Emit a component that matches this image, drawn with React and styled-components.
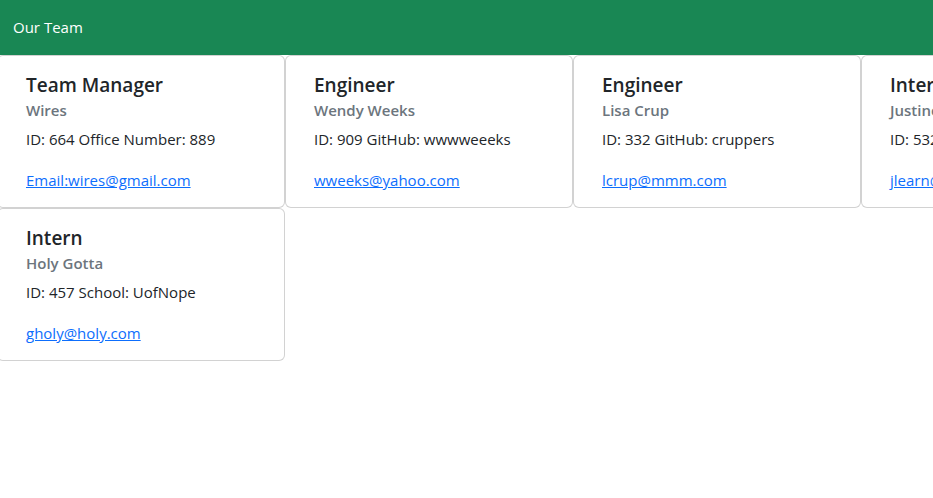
import React from "react";
import styled, { createGlobalStyle } from "styled-components";

const Global = createGlobalStyle`
  html, body { margin: 0; padding: 0; background: #fff; overflow-x: hidden; }
  body {
    font-family: "Segoe UI", "Open Sans", "Noto Sans", "Liberation Sans", sans-serif;
    font-size: 16px;
    line-height: 1.5;
    color: #212529;
  }
  * { box-sizing: border-box; }
`;

const Header = styled.header`
  height: 55px;
  background: #198754;
  color: #fff;
  display: flex;
  align-items: center;
  padding: 0 13px;
  font-size: 15px;
`;

const Grid = styled.main`
  display: grid;
  grid-template-columns: repeat(4, 288px);
  width: 1152px;
  margin-left: -3px;
`;

const Card = styled.section`
  border: 1px solid rgba(0, 0, 0, 0.175);
  border-radius: 6px;
  padding: 17px 28px 15px;
  background: #fff;
  white-space: nowrap;
  overflow: hidden;
`;

const Title = styled.h5`
  margin: 0 0 8px;
  font-size: 19px;
  font-weight: 600;
  line-height: 24px;
  color: #212529;
`;

const Subtitle = styled.h6`
  margin: -4px 0 0;
  font-size: 15px;
  font-weight: 600;
  line-height: 19px;
  color: #6c757d;
`;

const Info = styled.p`
  margin: 7px 0 17px;
  font-size: 15px;
  line-height: 24px;
`;

const Mail = styled.a`
  display: inline-block;
  color: #0d6efd;
  text-decoration: underline;
  font-size: 15px;
  line-height: 24px;
`;

const team = [
  { role: "Team Manager", name: "Wires", info: "ID: 664 Office Number: 889", email: "wires@gmail.com", label: "Email:wires@gmail.com" },
  { role: "Engineer", name: "Wendy Weeks", info: "ID: 909 GitHub: wwwweeeks", email: "wweeks@yahoo.com" },
  { role: "Engineer", name: "Lisa Crup", info: "ID: 332 GitHub: cruppers", email: "lcrup@mmm.com" },
  { role: "Intern", name: "Justine Learn", info: "ID: 532 School: UofLearn", email: "jlearn@learn.com" },
  { role: "Intern", name: "Holy Gotta", info: "ID: 457 School: UofNope", email: "gholy@holy.com" },
];

export default function App() {
  return (
    <>
      <Global />
      <Header>Our Team</Header>
      <Grid>
        {team.map((m, i) => (
          <Card key={i}>
            <Title>{m.role}</Title>
            <Subtitle>{m.name}</Subtitle>
            <Info>{m.info}</Info>
            <Mail href={`mailto:${m.email}`}>{m.label || m.email}</Mail>
          </Card>
        ))}
      </Grid>
    </>
  );
}
